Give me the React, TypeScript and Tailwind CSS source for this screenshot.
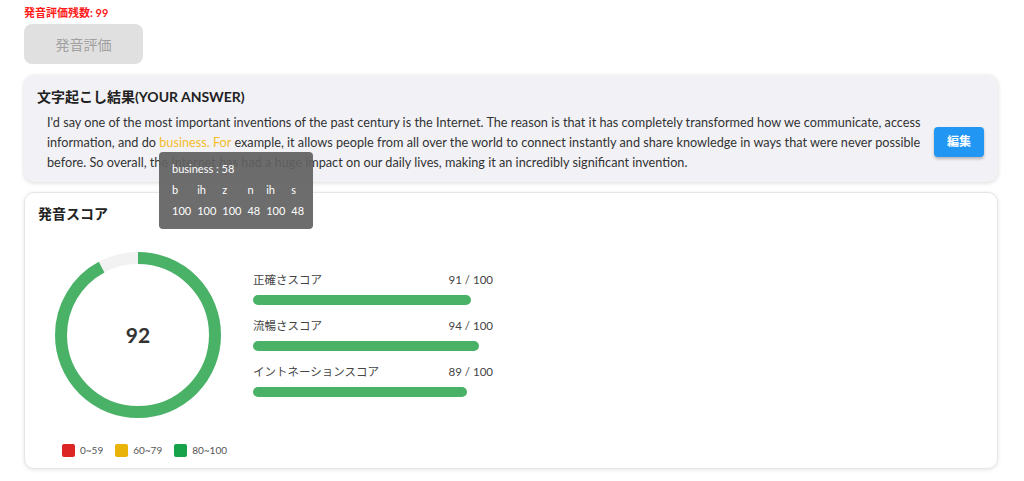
import React from 'react';

const font = { fontFamily: 'Lato, "Noto Sans CJK JP", sans-serif' };

const scores = [
  { label: '正確さスコア', value: 91 },
  { label: '流暢さスコア', value: 94 },
  { label: 'イントネーションスコア', value: 89 },
];

const phonemes = [
  { p: 'b', s: 100 },
  { p: 'ih', s: 100 },
  { p: 'z', s: 100 },
  { p: 'n', s: 48 },
  { p: 'ih', s: 100 },
  { p: 's', s: 48 },
];

const Ring = ({ value }: { value: number }) => {
  const r = 77;
  const c = 2 * Math.PI * r;
  return (
    <div className="relative w-[166px] h-[166px]">
      <svg width="166" height="166" viewBox="0 0 166 166">
        <circle cx="83" cy="83" r={r} fill="none" stroke="#f2f2f2" strokeWidth="12" />
        <circle
          cx="83"
          cy="83"
          r={r}
          fill="none"
          stroke="#49b267"
          strokeWidth="12"
          strokeDasharray={`${(c * value) / 100} ${c}`}
          transform="rotate(-90 83 83)"
        />
      </svg>
      <div className="absolute inset-0 flex items-center justify-center text-[21px] font-bold text-[#333]">
        {value}
      </div>
    </div>
  );
};

export default function App() {
  return (
    <div className="bg-white min-h-[481px] pt-[6px] pb-4 pl-6 pr-[26px] text-[#333]" style={font}>
      <div className="text-[11px] font-bold text-[#ff1a1a] leading-[14px]">発音評価残数: 99</div>
      <button className="mt-[4px] w-[119px] h-[40px] rounded-[8px] bg-[#e0e0e0] text-[14px] text-[#a0a0a0]">
        発音評価
      </button>

      <div className="relative mt-[11px] bg-[#f1f1f6] rounded-[10px] shadow-[0_1px_4px_rgba(0,0,0,0.15)] pt-[12px] pb-[10px] pl-[13px] pr-[14px]">
        <div className="text-[14px] font-bold leading-[20px] text-[#222]">文字起こし結果(YOUR ANSWER)</div>
        <div className="flex items-center mt-[5px]">
          <div className="flex-1 pl-[10px] pr-[10px] text-[12.7px] leading-[20px] text-[#333] whitespace-nowrap">
            <div>
              I'd say one of the most important inventions of the past century is the Internet. The reason is that it
              has completely transformed how we communicate, access
            </div>
            <div>
              information, and do <span className="text-[#f5bd2a]">business. For</span> example, it allows people from
              all over the world to connect instantly and share knowledge in ways that were never possible
            </div>
            <div>
              before. So overall, the Internet has had a huge impact on our daily lives, making it an incredibly
              significant invention.
            </div>
          </div>
          <button className="w-[50px] h-[30px] rounded-[4px] bg-[#2196f3] text-white text-[12px] font-bold shadow-[0_2px_3px_rgba(0,0,0,0.25)]">
            編集
          </button>
        </div>
        <div className="absolute left-[135px] top-[77px] z-10 w-[154px] rounded-[4px] bg-[rgba(97,97,97,0.92)] px-[13px] pt-[10px] pb-[11px] text-[11px] text-white leading-[14px]">
          <div>business : 58</div>
          <div className="flex gap-[6px] mt-[7px]">
            {phonemes.map((ph, i) => (
              <div key={i} className="flex flex-col gap-[7px]">
                <span>{ph.p}</span>
                <span>{ph.s}</span>
              </div>
            ))}
          </div>
        </div>
      </div>

      <div className="mt-[10px] bg-white rounded-[10px] border border-[#e6e6e6] shadow-[0_1px_4px_rgba(0,0,0,0.1)] pt-[11px] pl-[13px] pb-[10px]">
        <div className="text-[14px] font-bold leading-[20px] text-[#222]">発音スコア</div>
        <div className="flex items-start mt-[27px]">
          <div className="ml-[17px] mt-[1px]">
            <Ring value={92} />
          </div>
          <div className="ml-[32px] mt-[21px] w-[240px] flex flex-col gap-[13px]">
            {scores.map((s) => (
              <div key={s.label}>
                <div className="flex justify-between text-[11.5px] leading-[16px] text-[#444]">
                  <span>{s.label}</span>
                  <span>{s.value} / 100</span>
                </div>
                <div className="mt-[7px] h-[10px]">
                  <div className="h-full rounded-full bg-[#49b267]" style={{ width: `${s.value}%` }} />
                </div>
              </div>
            ))}
          </div>
        </div>
        <div className="flex items-center gap-[12px] ml-[24px] mt-[25px] text-[10px] text-[#555]">
          <div className="flex items-center gap-[5px]">
            <span className="w-[13px] h-[13px] rounded-[2px] bg-[#dc2626]" />
            0~59
          </div>
          <div className="flex items-center gap-[5px]">
            <span className="w-[13px] h-[13px] rounded-[2px] bg-[#eab308]" />
            60~79
          </div>
          <div className="flex items-center gap-[5px]">
            <span className="w-[13px] h-[13px] rounded-[2px] bg-[#16a34a]" />
            80~100
          </div>
        </div>
      </div>
    </div>
  );
}
